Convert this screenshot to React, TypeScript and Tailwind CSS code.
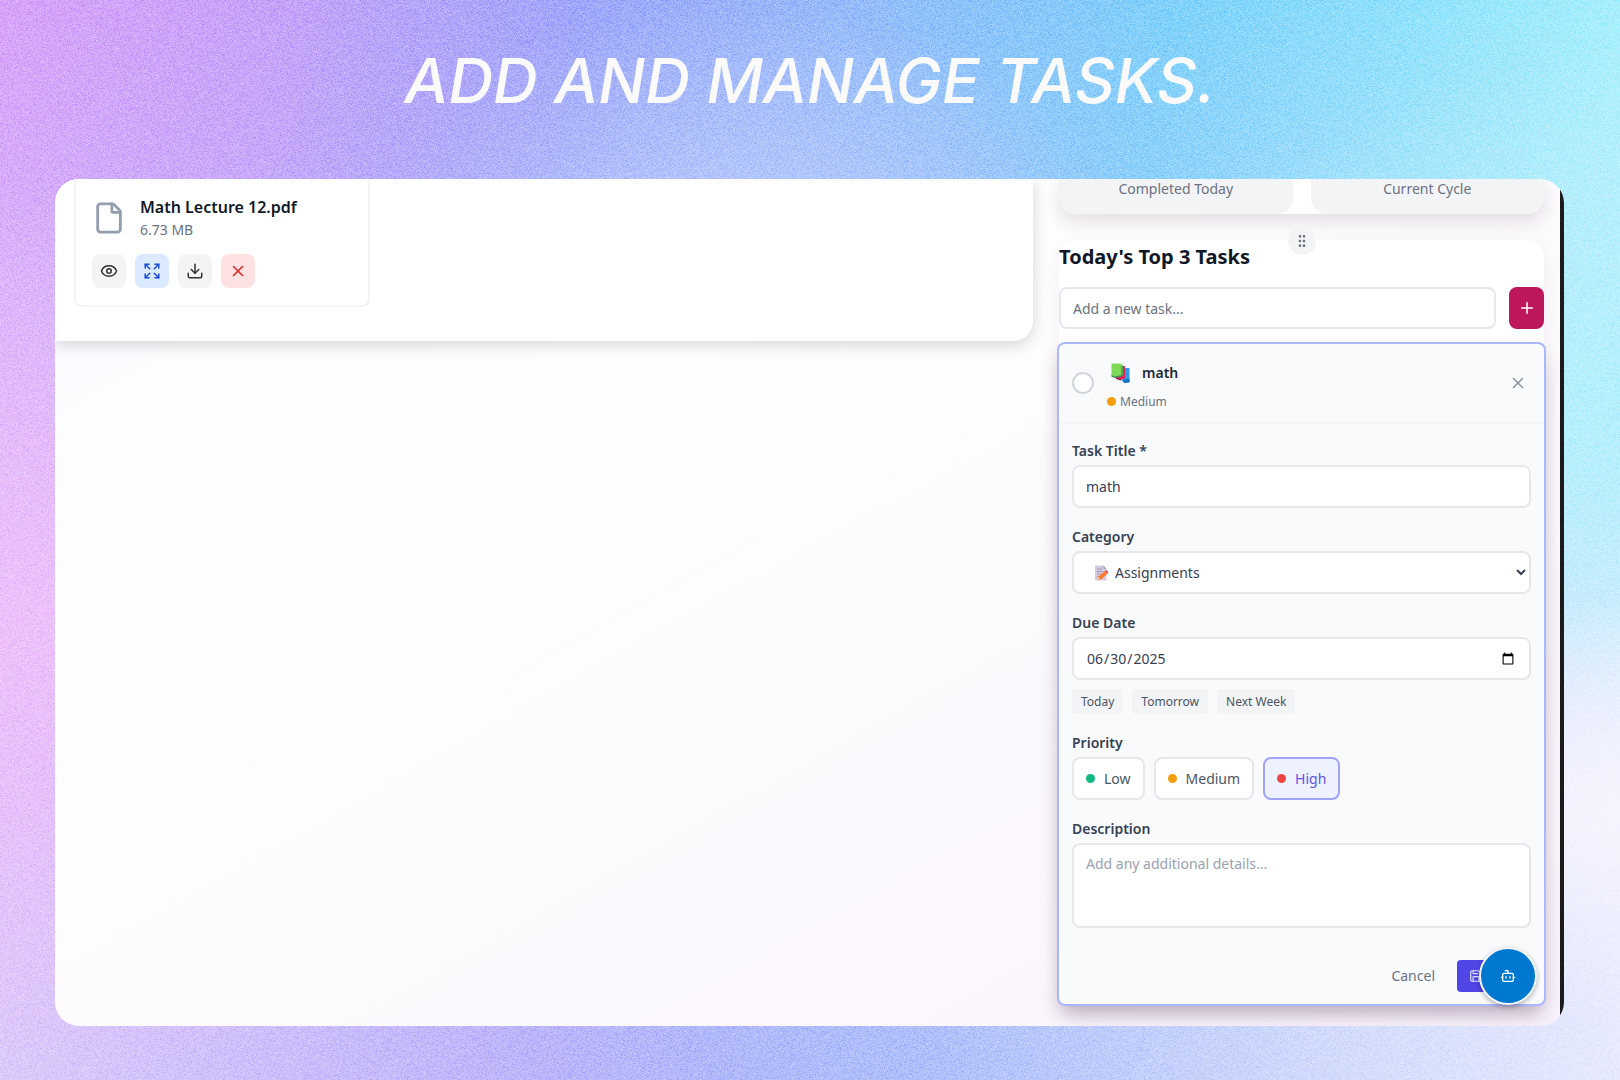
import { useState } from 'react';
import { Bot, Download, Expand, Eye, File, GripVertical, Plus, Save, X } from 'lucide-react';

type Priority = 'Low' | 'Medium' | 'High';

const priorities: { name: Priority; dot: string }[] = [
    { name: 'Low', dot: 'bg-[#10b981]' },
    { name: 'Medium', dot: 'bg-[#f59e0b]' },
    { name: 'High', dot: 'bg-[#ef4444]' }
];

const fileActions = [
    { label: 'Preview', icon: Eye, style: 'bg-gray-100 text-[#333333]' },
    { label: 'Full screen', icon: Expand, style: 'bg-[#dbeafe] text-[#1d4ed8]' },
    { label: 'Download', icon: Download, style: 'bg-gray-100 text-[#333333]' },
    { label: 'Remove', icon: X, style: 'bg-[#fee2e2] text-[#dc2626]' }
];

const fieldClass =
    'block w-full h-[43px] px-3 rounded-lg border-2 border-gray-200 bg-white text-sm text-gray-700 outline-none focus:border-indigo-300';
const labelClass = 'block mb-1 text-sm leading-5 font-semibold text-gray-700';

// Grainy purple to cyan backdrop behind the whole page
const Backdrop = () => (
    <svg className="absolute inset-0 w-full h-full" aria-hidden="true">
        <defs>
            <linearGradient id="bottomTone">
                <stop offset="0" stopColor="#dccbfc" />
                <stop offset="0.2" stopColor="#cbbdfd" />
                <stop offset="0.33" stopColor="#bdb6fd" />
                <stop offset="0.43" stopColor="#b2b9fd" />
                <stop offset="0.57" stopColor="#b0c0fd" />
                <stop offset="0.8" stopColor="#d0dafd" />
                <stop offset="1" stopColor="#e8ebfe" />
            </linearGradient>
            <linearGradient id="topTone" gradientTransform="rotate(6)">
                <stop offset="0" stopColor="#d8a4fb" />
                <stop offset="0.17" stopColor="#c7a4fc" />
                <stop offset="0.36" stopColor="#a0a8fd" />
                <stop offset="0.5" stopColor="#98bafd" />
                <stop offset="0.72" stopColor="#7fd2fd" />
                <stop offset="0.88" stopColor="#93e4fd" />
                <stop offset="1" stopColor="#a8f0fe" />
            </linearGradient>
            <linearGradient id="fade" x2="0" y2="1">
                <stop offset="0" stopColor="#fff" />
                <stop offset="0.75" stopColor="#000" />
            </linearGradient>
            <mask id="topMask" maskContentUnits="objectBoundingBox">
                <rect width="1" height="1" fill="url(#fade)" />
            </mask>
            <radialGradient id="pink" cx="0" cy="0.58" r="0.42">
                <stop offset="0" stopColor="#edc2fd" />
                <stop offset="0.4" stopColor="#ecbffd" stopOpacity="0.7" />
                <stop offset="1" stopColor="#ecbffd" stopOpacity="0" />
            </radialGradient>
            <radialGradient id="mist" cx="0.46" cy="0.24" r="0.24">
                <stop offset="0" stopColor="#c2d0fe" stopOpacity="0.9" />
                <stop offset="1" stopColor="#c2d0fe" stopOpacity="0" />
            </radialGradient>
            <radialGradient id="ice" cx="1" cy="0.36" r="0.3">
                <stop offset="0" stopColor="#b6f0fe" />
                <stop offset="0.4" stopColor="#b6f0fe" stopOpacity="0.7" />
                <stop offset="1" stopColor="#b6f0fe" stopOpacity="0" />
            </radialGradient>
            <radialGradient id="snow" cx="1" cy="0.75" r="0.2">
                <stop offset="0" stopColor="#f6f5fe" />
                <stop offset="1" stopColor="#f6f5fe" stopOpacity="0" />
            </radialGradient>
            <filter id="grain" x="0" y="0" width="100%" height="100%" colorInterpolationFilters="sRGB">
                <feTurbulence type="fractalNoise" baseFrequency="1.7" numOctaves="2" />
                <feColorMatrix values="2 0 0 0 -0.5  2 0 0 0 -0.5  2 0 0 0 -0.5  0 0 0 0 1" />
            </filter>
        </defs>
        <rect width="100%" height="100%" fill="url(#bottomTone)" />
        <rect width="100%" height="100%" fill="url(#topTone)" mask="url(#topMask)" />
        <rect width="100%" height="100%" fill="url(#pink)" />
        <rect width="100%" height="100%" fill="url(#mist)" />
        <rect width="100%" height="100%" fill="url(#ice)" />
        <rect width="100%" height="100%" fill="url(#snow)" />
        <rect width="100%" height="100%" filter="url(#grain)" className="mix-blend-soft-light" opacity="0.5" />
    </svg>
);

const BooksIcon = () => (
    <svg width="22" height="22" viewBox="0 0 22 22" aria-hidden="true">
        <path d="M12 6h7.500v14.500l-5 .5L12 19z" fill="#2f9be8" />
        <path d="M13 18l6.500-1.500V20l-5 1z" fill="#1673c4" />
        <path d="M6 4h9v12.500l-4.500 1.500L6 16z" fill="#e0245e" />
        <path d="M6 15.500l5 1.500v1.500L6 17z" fill="#8f1d55" />
        <path d="M1.500 1.500h10V14l-7 1.500-3-1z" fill="#7ed957" />
        <path d="M1.500 13l3 1.500 7-1.500v1.500L4.500 16l-3-1.500z" fill="#3b8f5a" />
        <path d="M11.500 3v11l1.500-.5V3.500z" fill="#4da64d" />
    </svg>
);

const MemoIcon = () => (
    <svg
        className="absolute left-[22px] top-1/2 -translate-y-1/2 pointer-events-none"
        width="15"
        height="16"
        viewBox="0 0 15 16"
        aria-hidden="true"
    >
        <path d="M1 .5h8.500L12.500 4v11.500H1z" fill="#d5cbe0" />
        <path d="M9.500.5V4h3z" fill="#a99bbd" />
        <path d="M3 4h5M3 6.500h6M3 9h4M3 11.500h2" stroke="#a596b8" strokeWidth="1" />
        <path d="M3.500 15l1-3.500L11 6l2.500 2.500-6.500 6z" fill="#fb7a2c" />
        <path d="M11 6l1.200-1 2.300 2.500-1 1z" fill="#e8384f" />
        <path d="M3.500 15l1-3.500 2.500 3z" fill="#f6b98b" />
    </svg>
);

const LecturePanel = () => (
    <div>
        <section className="bg-white rounded-br-[20px] pl-[19px] pr-4 pb-[34px] shadow-[0_4px_16px_rgba(0,0,0,0.16)]">
            <div className="w-[296px] max-w-full border-2 border-t-0 border-gray-100 rounded-b-lg px-4 pt-4 pb-[17px]">
                <div className="flex items-center gap-[14px]">
                    <File size={34} className="text-[#949eae]" />
                    <div>
                        <p className="text-base leading-6 font-semibold text-gray-900">Math Lecture 12.pdf</p>
                        <p className="text-sm leading-[22px] text-gray-500">6.73 MB</p>
                    </div>
                </div>
                <div className="flex gap-[9px] mt-[13px]">
                    {fileActions.map(({ label, icon: Icon, style }) => (
                        <button
                            key={label}
                            type="button"
                            aria-label={label}
                            className={`w-[34px] h-[34px] rounded-lg flex items-center justify-center ${style}`}
                        >
                            <Icon size={18} />
                        </button>
                    ))}
                </div>
            </div>
        </section>
    </div>
);

const TaskForm = () => {
    const [title, setTitle] = useState('math');
    const [dueDate, setDueDate] = useState('2025-06-30');
    const [priority, setPriority] = useState<Priority>('High');

    return (
        <form className="flex flex-col gap-[19px] px-[13px] pt-[17px] pb-3" onSubmit={(e) => e.preventDefault()}>
            <div>
                <label htmlFor="task-title" className={labelClass}>Task Title *</label>
                <input
                    id="task-title"
                    type="text"
                    value={title}
                    onChange={(e) => setTitle(e.target.value)}
                    className={fieldClass}
                />
            </div>

            <div>
                <label htmlFor="task-category" className={labelClass}>Category</label>
                <div className="relative">
                    <select
                        id="task-category"
                        className="block w-full h-[43px] pl-[37px] rounded-lg border-2 border-gray-200 bg-white text-sm text-gray-700 outline-none"
                    >
                        <option>Assignments</option>
                    </select>
                    <MemoIcon />
                </div>
            </div>

            <div>
                <label htmlFor="task-due" className={labelClass}>Due Date</label>
                <input
                    id="task-due"
                    type="date"
                    value={dueDate}
                    onChange={(e) => setDueDate(e.target.value)}
                    className={fieldClass}
                />
                <div className="flex gap-[9px] mt-[9px]">
                    {['Today', 'Tomorrow', 'Next Week'].map((day) => (
                        <button key={day} type="button" className="h-[25px] px-[9px] rounded bg-gray-100 text-xs text-gray-600">
                            {day}
                        </button>
                    ))}
                </div>
            </div>

            <div>
                <p className={labelClass}>Priority</p>
                <div className="flex gap-[9px]">
                    {priorities.map(({ name, dot }) => (
                        <button
                            key={name}
                            type="button"
                            aria-pressed={priority === name}
                            onClick={() => setPriority(name)}
                            className={`h-[43px] px-3 flex items-center gap-[9px] rounded-lg border-2 text-sm ${
                                priority === name
                                    ? 'border-[#a0a3fa] bg-[#eef2ff] text-[#6055dd]'
                                    : 'border-gray-200 bg-white text-gray-600'
                            }`}
                        >
                            <span className={`w-[9px] h-[9px] rounded-full ${dot}`} />
                            {name}
                        </button>
                    ))}
                </div>
            </div>

            <div>
                <label htmlFor="task-description" className={labelClass}>Description</label>
                <textarea
                    id="task-description"
                    placeholder="Add any additional details..."
                    className="block w-full h-[85px] px-3 py-[9px] rounded-lg border-2 border-gray-200 bg-white text-sm text-gray-700 placeholder:text-gray-400 resize-none outline-none"
                />
            </div>

            <div className="flex justify-end items-center gap-[22px] pt-[13px]">
                <button type="button" className="text-sm text-gray-500">Cancel</button>
                <button
                    type="submit"
                    aria-label="Save"
                    className="w-[74px] h-8 pl-3 rounded bg-[#4f46e5] text-indigo-100"
                >
                    <Save size={14} />
                </button>
            </div>
        </form>
    );
};

const TaskColumn = () => (
    <aside>
        <div className="mx-0.5 grid grid-cols-2 gap-[18px] rounded-b-2xl bg-white shadow-[0_8px_18px_rgba(60,20,60,0.13)]">
            {['Completed Today', 'Current Cycle'].map((stat) => (
                <div key={stat} className="h-[35px] rounded-b-2xl bg-gray-100 text-center text-sm leading-[19px] text-gray-500">
                    {stat}
                </div>
            ))}
        </div>

        <section className="relative mt-[26px] pt-[3px] mx-0.5 rounded-2xl bg-white shadow-[0_4px_16px_rgba(60,20,60,0.06)]">
            <button
                type="button"
                aria-label="Move section"
                className="absolute -top-[13px] left-1/2 -translate-x-1/2 w-7 h-7 rounded-full bg-gray-100 text-gray-500 flex items-center justify-center"
            >
                <GripVertical size={16} />
            </button>

            <h2 className="text-xl leading-7 font-bold text-gray-900">Today's Top 3 Tasks</h2>

            <div className="flex gap-[13px] mt-4">
                <input
                    type="text"
                    aria-label="New task"
                    placeholder="Add a new task..."
                    className="flex-1 min-w-0 h-[42px] px-3 rounded-lg border-2 border-gray-200 bg-white text-sm placeholder:text-gray-500 outline-none"
                />
                <button
                    type="button"
                    aria-label="Add task"
                    className="w-[35px] h-[42px] rounded-lg bg-[#be185d] text-white flex items-center justify-center"
                >
                    <Plus size={18} />
                </button>
            </div>

            <article className="-mx-0.5 mt-[13px] rounded-lg border-2 border-[#a9b7fc] bg-[#f9fafc] shadow-[0_12px_20px_-4px_rgba(60,20,60,0.3)]">
                <header className="h-20 px-[13px] flex items-center border-b-2 border-gray-100">
                    <input
                        type="checkbox"
                        aria-label="Mark math as done"
                        className="appearance-none w-[22px] h-[22px] rounded-full border-2 border-gray-300 bg-white"
                    />
                    <div className="ml-[13px] pt-2 flex-1">
                        <div className="flex items-center h-6 gap-[10px] pl-[3px]">
                            <BooksIcon />
                            <h3 className="text-sm font-semibold text-gray-800">math</h3>
                        </div>
                        <div className="flex items-center h-6 mt-[5px] gap-1 text-xs text-gray-500">
                            <span className="w-[9px] h-[9px] rounded-full bg-[#f59e0b]" />
                            Medium
                        </div>
                    </div>
                    <button type="button" aria-label="Close" className="w-[26px] h-[26px] flex items-center justify-center text-[#8b93a1]">
                        <X size={18} />
                    </button>
                </header>
                <TaskForm />
            </article>
        </section>
    </aside>
);

const App = () => {
    return (
        <div className="relative isolate min-h-screen px-[55px] pt-[51px] pb-[54px] font-['Noto_Sans',sans-serif]">
            <div className="absolute inset-0 -z-10">
                <Backdrop />
            </div>

            <h1 className="text-center font-['Inter',sans-serif] text-[62px] leading-[60px] font-medium italic text-[#fafafa]">
                ADD AND MANAGE TASKS.
            </h1>

            <div className="relative mt-[68px] mr-px rounded-3xl overflow-hidden bg-linear-to-br from-[#f8fbff] via-[#fefefe] via-30% to-[#f9f3fc]">
                <main className="grid grid-cols-[2fr_1fr] gap-6 pr-[14px] pb-5 border-r-4 border-[#1c1c1c]">
                    <LecturePanel />
                    <TaskColumn />
                </main>
                <button
                    type="button"
                    aria-label="Open assistant"
                    className="absolute right-[27px] bottom-[21px] w-[58px] h-[58px] rounded-full border-2 border-[#f3f4f6] bg-[#0078d0] text-white flex items-center justify-center shadow-[0_2px_5px_rgba(0,0,0,0.3)]"
                >
                    <Bot size={16} />
                </button>
            </div>
        </div>
    );
};

export default App;
